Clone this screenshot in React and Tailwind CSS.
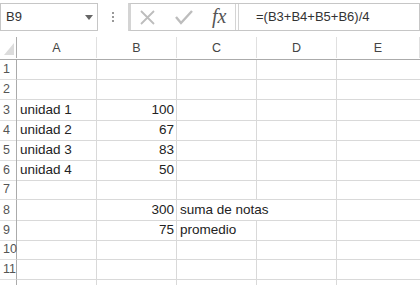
const COLS = ["A", "B", "C", "D", "E"];
const ROWS = [
  { n: 1 },
  { n: 2 },
  { n: 3, a: "unidad 1", b: "100" },
  { n: 4, a: "unidad 2", b: "67" },
  { n: 5, a: "unidad 3", b: "83" },
  { n: 6, a: "unidad 4", b: "50" },
  { n: 7 },
  { n: 8, b: "300", c: "suma de notas", spill: true },
  { n: 9, b: "75", c: "promedio" },
  { n: 10 },
  { n: 11 },
  { n: "" },
];

const grid = "grid grid-cols-[17px_80px_80px_80px_80px_83px]";

export default function App() {
  return (
    <div className="w-[420px] h-[285px] overflow-hidden bg-white font-['Liberation_Sans',Arial,sans-serif] text-[#222]">
      {/* Formula bar */}
      <div className="h-[37px] flex items-start pt-[3px]">
        <div className="w-[98px] h-[28px] border border-[#c6c6c6] flex items-center justify-between pl-[5px] pr-[4px] text-[13px] text-[#333]">
          <span>B9</span>
          <svg width="8" height="5" viewBox="0 0 8 5">
            <path d="M0 0 L8 0 L4 5 Z" fill="#666" />
          </svg>
        </div>
        <div className="w-[30px] h-[28px] flex flex-col items-center justify-center gap-[2px]">
          <span className="w-[2px] h-[2px] bg-[#999]" />
          <span className="w-[2px] h-[2px] bg-[#999]" />
          <span className="w-[2px] h-[2px] bg-[#999]" />
        </div>
        <div className="flex-1 h-[28px] border border-[#c6c6c6] border-l-[3px] border-l-[#d4d4d4] flex items-center">
          <div className="flex items-center gap-[19px] pl-[8px] w-[104px]">
            <svg width="17" height="17" viewBox="0 0 17 17">
              <path d="M2 2 L15 15 M15 2 L2 15" stroke="#bdbdbd" strokeWidth="1.8" />
            </svg>
            <svg width="18" height="16" viewBox="0 0 18 16">
              <path d="M1 8 L6 14 L17 2" stroke="#bdbdbd" strokeWidth="2.4" fill="none" />
            </svg>
            <span className="font-['Liberation_Serif',serif] italic text-[20px] leading-none text-[#555] -mt-[2px]">fx</span>
          </div>
          <div className="w-[4px] h-full border-x border-[#d4d4d4]" />
          <span className="pl-[17px] text-[13px] text-[#333]">=(B3+B4+B5+B6)/4</span>
        </div>
      </div>

      {/* Column headers */}
      <div className={`${grid} h-[23px] border-b border-[#ababab] text-[12.5px] text-[#444]`}>
        <div className="border-r border-[#ababab] flex items-end justify-end pb-[3px] pr-[2px]">
          <svg width="10" height="12" viewBox="0 0 10 12">
            <path d="M10 0 L10 12 L0 12 Z" fill="#dcdcdc" />
          </svg>
        </div>
        {COLS.map((c) => (
          <div key={c} className="border-r border-[#e0e0e0] flex items-center justify-center pt-[2px]">
            {c}
          </div>
        ))}
        <div />
      </div>

      {/* Rows */}
      {ROWS.map((r, i) => (
        <div key={i} className={`${grid} h-[20px] text-[13.5px]`}>
          <div className="border-r border-b border-r-[#ababab] border-b-[#e0e0e0] text-[12.5px] text-[#555] flex items-center pl-[3px]">
            {r.n}
          </div>
          <div className="border-r border-b border-[#d9d9d9] flex items-center pl-[3px] whitespace-nowrap">
            {r.a}
          </div>
          <div className="border-r border-b border-[#d9d9d9] flex items-center justify-end pr-[2px]">
            {r.b}
          </div>
          <div className={`border-b border-[#d9d9d9] flex items-center pl-[3px] whitespace-nowrap relative z-10 ${r.spill ? "" : "border-r"}`}>
            {r.c}
          </div>
          <div className="border-r border-b border-[#d9d9d9]" />
          <div className="border-b border-[#d9d9d9]" />
        </div>
      ))}
    </div>
  );
}
